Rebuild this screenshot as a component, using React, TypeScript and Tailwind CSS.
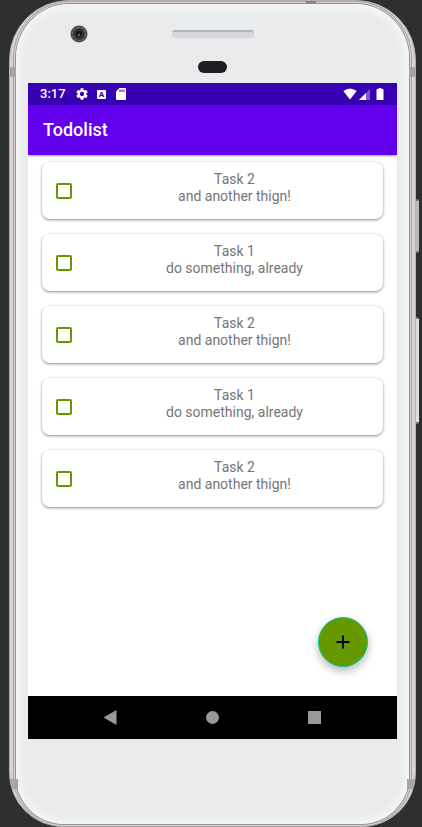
import React, { useState } from "react";

type Task = { id: number; title: string; detail: string };

const TASKS: Task[] = [
  { id: 1, title: "Task 2", detail: "and another thign!" },
  { id: 2, title: "Task 1", detail: "do something, already" },
  { id: 3, title: "Task 2", detail: "and another thign!" },
  { id: 4, title: "Task 1", detail: "do something, already" },
  { id: 5, title: "Task 2", detail: "and another thign!" },
];

function StatusBar() {
  return (
    <div className="flex h-[22px] items-center justify-between bg-[#3700b3] pl-3 pr-[13px] text-white">
      <div className="flex items-center">
        <span className="w-9 text-[13px] leading-[22px] font-medium">3:17</span>
        <svg className="size-3" viewBox="2 2 20 20" fill="currentColor" aria-hidden="true">
          <path d="M19.14 12.94c.04-.3.06-.61.06-.94 0-.32-.02-.64-.07-.94l2.03-1.58a.49.49 0 0 0 .12-.61l-1.92-3.32a.49.49 0 0 0-.59-.22l-2.39.96a7 7 0 0 0-1.62-.94l-.36-2.54A.48.48 0 0 0 13.920 2.400h-3.840a.48.48 0 0 0-.47.41l-.36 2.54c-.59.24-1.13.57-1.62.94l-2.39-.96a.48.48 0 0 0-.59.22L2.740 8.870a.48.48 0 0 0 .12.61l2.030 1.580c-.05.3-.09.63-.09.94s.02.64.07.94l-2.030 1.580a.49.49 0 0 0-.12.61l1.920 3.320c.12.22.37.29.59.22l2.390-.96c.5.38 1.030.7 1.620.94l.36 2.540c.05.24.24.41.48.41h3.840c.24 0 .44-.17.47-.41l.36-2.540c.59-.24 1.130-.56 1.620-.94l2.390.96c.22.08.47 0 .59-.22l1.920-3.320a.48.48 0 0 0-.12-.61zM12 15.600a3.600 3.600 0 1 1 0-7.200 3.600 3.600 0 0 1 0 7.200z" />
        </svg>
        <span className="ml-[9px] flex size-[9px] items-center justify-center rounded-[1px] bg-white text-[8px] leading-[9px] font-black text-[#3700b3]">
          A
        </span>
        <svg className="ml-[10px] h-3 w-[10px]" viewBox="0 0 10 12" fill="none" aria-hidden="true">
          <path d="M3.500 0H9Q10 0 10 1V11Q10 12 9 12H1Q0 12 0 11V3.500Z" fill="#fff" />
          <path d="M4 1.500V4M6 1.500V4M8 1.500V4" stroke="#3700b3" />
        </svg>
      </div>
      <div className="flex items-center">
        <svg className="h-3 w-[14px]" viewBox="0 0 14 12" fill="currentColor" aria-hidden="true">
          <path d="M0.300 3Q7 -2.200 13.700 3L7 11.500Z" />
        </svg>
        <svg className="ml-[2px] size-[11px]" viewBox="0 0 11 11" fill="currentColor" aria-hidden="true">
          <path d="M0 11L11 0V11Z" opacity=".35" />
          <path d="M0 11L7 4V11Z" />
        </svg>
        <svg className="ml-[6px] h-3 w-2" viewBox="0 0 8 12" fill="currentColor" aria-hidden="true">
          <path d="M2.500 0H5.500V1H7Q7.500 1 7.500 1.500V11.500Q7.500 12 7 12H1Q0.500 12 0.500 11.500V1.500Q0.500 1 1 1H2.500Z" />
        </svg>
      </div>
    </div>
  );
}

function TaskCard({ task }: { task: Task }) {
  const [done, setDone] = useState(false);
  const id = `task-${task.id}`;
  return (
    <li className="flex h-[57px] items-center rounded-lg bg-white pl-[14px] shadow-[0_1px_3px_rgba(0,0,0,0.45)]">
      <input
        id={id}
        type="checkbox"
        checked={done}
        onChange={() => setDone(!done)}
        className="size-4 shrink-0 appearance-none rounded-[2px] border-2 border-[#669900] bg-white checked:bg-[#669900]"
      />
      <label htmlFor={id} className="flex-1 pr-[2px] pb-[5px] pl-4 text-center text-[14px] leading-[17px] text-[#757575]">
        {task.title}
        <br />
        {task.detail}
      </label>
    </li>
  );
}

function NavigationBar() {
  const button = "flex h-full w-[102px] items-center justify-center";
  return (
    <nav className="flex h-[43px] justify-center bg-black">
      <button type="button" aria-label="Back" className={button}>
        <svg className="mr-[2px] h-[15px] w-[14px]" viewBox="0 0 14 15" fill="#999" aria-hidden="true">
          <path d="M0.500 7.500L13.500 0V15Z" />
        </svg>
      </button>
      <button type="button" aria-label="Home" className={button}>
        <span className="size-[13px] rounded-full bg-[#999999]" />
      </button>
      <button type="button" aria-label="Recent apps" className={button}>
        <span className="size-[13px] bg-[#999999]" />
      </button>
    </nav>
  );
}

function PhoneTop() {
  return (
    <div className="relative flex h-[79px] flex-col items-center pt-[26px]">
      <div className="h-2 w-[82px] rounded-[3px] border-t-2 border-[#b0b5bd] bg-[#d6d8dc]" />
      <div className="mt-[23px] h-3 w-[29px] rounded-full bg-[#1d1f22]" />
      <svg className="absolute top-[21px] left-[42px] size-[18px]" viewBox="0 0 18 18" aria-hidden="true">
        <circle cx="9" cy="9" r="8.500" fill="#4a4c4f" />
        <circle cx="9" cy="9" r="6.500" fill="none" stroke="#77797b" strokeDasharray="2 2" />
        <circle cx="9" cy="9" r="5.500" fill="#303234" />
        <circle cx="9" cy="9" r="3" fill="#151515" />
        <circle cx="9" cy="10" r="1.300" fill="#6b6a2e" />
      </svg>
    </div>
  );
}

function AntennaBands() {
  return (
    <div className="absolute inset-0 overflow-hidden rounded-t-[59px] rounded-b-[53px]">
      <div className="absolute top-[66px] left-0 h-[10px] w-[6px] bg-[#a8a3a5]" />
      <div className="absolute top-[66px] right-0 h-[10px] w-[6px] bg-[#a8a3a5]" />
      <div className="absolute top-0 right-[99px] h-[3px] w-[10px] bg-[#8b8687]" />
      <div className="absolute bottom-[37px] left-0 h-[10px] w-[8px] bg-[#a8a3a5]" />
      <div className="absolute right-0 bottom-[37px] h-[10px] w-[8px] bg-[#a8a3a5]" />
    </div>
  );
}

export default function App() {
  return (
    <div className="flex min-h-screen bg-[#2d2f31] pr-[6px] pl-[9px] font-[Roboto,sans-serif]">
      <div className="relative flex flex-1 flex-col rounded-t-[60px] rounded-b-[54px] border border-[#b5adb0] bg-[#d9d2d5] px-[6px] pt-[3px] pb-[2px]">
        <div className="absolute top-[198px] -right-[4px] h-[54px] w-[3px] rounded-r-[2px] border-y-2 border-[#77797b] bg-[#b9babb]" />
        <div className="absolute top-[316px] -right-[4px] h-[107px] w-[3px] rounded-r-[2px] border-y-2 border-[#77797b] bg-[#dfe1df]" />

        <div className="relative flex flex-1 flex-col rounded-t-[54px] rounded-b-[48px] bg-[#eaebed] px-3 shadow-[inset_0_0_8px_3px_#f8f8fa,0_0_0_1px_#969194,0_0_0_2px_#d9d2d5,0_0_0_3px_#aaa4a7]">
          <PhoneTop />
          <div className="flex h-[656px] flex-col bg-white">
            <StatusBar />
            <header className="z-10 flex h-[50px] items-center bg-[#6200ee] pl-[15px] shadow-[0_2px_2px_-1px_rgba(0,0,0,0.4)]">
              <h1 className="text-[18px] leading-6 font-medium text-white">Todolist</h1>
            </header>
            <main className="relative flex-1 px-[14px] pt-[7px]">
              <ul className="flex flex-col gap-[15px]">
                {TASKS.map((task) => (
                  <TaskCard key={task.id} task={task} />
                ))}
              </ul>
              <button
                type="button"
                aria-label="Add task"
                className="absolute right-[29px] bottom-[29px] flex size-[50px] items-center justify-center rounded-full border border-[#03c5a0] bg-[#669900] shadow-[0_4px_8px_rgba(0,0,0,0.28)]"
              >
                <svg className="size-[14px]" viewBox="0 0 14 14" stroke="#000" strokeWidth="2" aria-hidden="true">
                  <path d="M7 0.500V13.500M0.500 7H13.500" />
                </svg>
              </button>
            </main>
            <NavigationBar />
          </div>
        </div>
        <div className="pointer-events-none">
          <AntennaBands />
        </div>
      </div>
    </div>
  );
}
